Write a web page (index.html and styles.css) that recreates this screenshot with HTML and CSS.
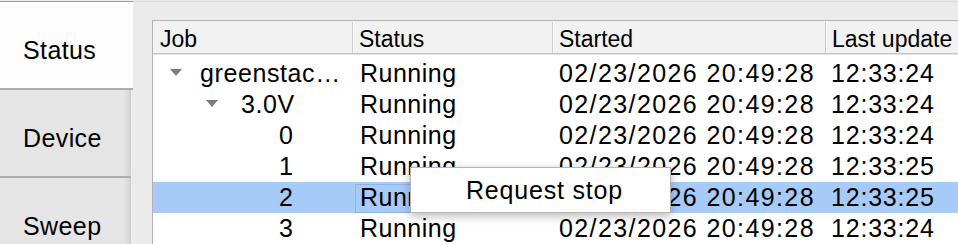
FILE: index.html
```html
<!DOCTYPE html>
<html>
<head>
<meta charset="utf-8">
<link rel="stylesheet" href="styles.css">
</head>
<body>
<div class="window">
  <nav class="tabs">
    <div class="tab active">Status</div>
    <div class="tab">Device</div>
    <div class="tab">Sweep</div>
  </nav>
  <main class="pane">
    <div class="tree">
      <div class="hdr">
        <div class="hc c1">Job</div>
        <div class="hc">Status</div>
        <div class="hc">Started</div>
        <div class="hc">Last update</div>
      </div>
      <div class="rows">
        <div class="row">
          <div class="cell job lvl0"><span class="arrow"></span><span class="name">greenstac…</span></div>
          <div class="cell st">Running</div>
          <div class="cell dt">02/23/2026 20:49:28</div>
          <div class="cell tm">12:33:24</div>
        </div>
        <div class="row">
          <div class="cell job lvl1"><span class="arrow"></span><span class="name">3.0V</span></div>
          <div class="cell st">Running</div>
          <div class="cell dt">02/23/2026 20:49:28</div>
          <div class="cell tm">12:33:24</div>
        </div>
        <div class="row">
          <div class="cell job lvl2">0</div>
          <div class="cell st">Running</div>
          <div class="cell dt">02/23/2026 20:49:28</div>
          <div class="cell tm">12:33:24</div>
        </div>
        <div class="row">
          <div class="cell job lvl2">1</div>
          <div class="cell st">Running</div>
          <div class="cell dt">02/23/2026 20:49:28</div>
          <div class="cell tm">12:33:25</div>
        </div>
        <div class="row selected">
          <div class="cell job lvl2">2</div>
          <div class="cell st focus">Running</div>
          <div class="cell dt">02/23/2026 20:49:28</div>
          <div class="cell tm">12:33:25</div>
        </div>
        <div class="row">
          <div class="cell job lvl2">3</div>
          <div class="cell st">Running</div>
          <div class="cell dt">02/23/2026 20:49:28</div>
          <div class="cell tm">12:33:24</div>
        </div>
      </div>
    </div>
    <div class="menu">Request stop</div>
  </main>
</div>
</body>
</html>
```

FILE: styles.css
```css
* { box-sizing: border-box; }

html, body {
  margin: 0;
  padding: 0;
  background: #ebebeb;
  overflow: hidden;
}

body {
  font-family: "Liberation Sans", Arial, sans-serif;
  color: #000;
}

.window {
  width: 958px;
  height: 244px;
  overflow: hidden;
  display: flex;
  align-items: flex-start;
  background: #ebebeb;
}

/* ---------- side tabs ---------- */
.tabs {
  width: 133px;
  flex: none;
  margin-top: 1px;
  border-top: 1px solid #a0a0a0;
  display: flex;
  flex-direction: column;
}

.tab {
  height: 88px;
  padding: 10px 0 0 23px;
  display: flex;
  align-items: center;
  font-size: 25px;
  letter-spacing: 0.4px;
  background: #e5e5e5;
  border-bottom: 2px solid #adadad;
  width: 131px;
  box-shadow: inset -7px 0 6px -5px rgba(0, 0, 0, 0.13);
}

.tab.active {
  width: 133px;
  background: #fdfdfd;
  box-shadow: none;
}

/* ---------- main pane ---------- */
.pane {
  position: relative;
  flex: 1;
  margin-top: 1px;
  border-top: 1px solid #d9d9d9;
  padding: 18px 0 0 19px;
  height: 243px;
}

.tree {
  width: 830px;
  height: 240px;
  background: #fff;
  border: 1px solid #b3b3b3;
  border-right: none;
  border-bottom: none;
}

.hdr {
  display: grid;
  grid-template-columns: 199px 200px 273px 1fr;
  height: 33px;
  background: #f2f2f2;
  border-bottom: 1px solid #c4c4c4;
  box-shadow: 0 1px 0 #e4e4e4;
  font-size: 23px;
}

.hc {
  padding: 3px 0 0 6px;
  line-height: 28px;
  border-left: 1px solid #cdcdcd;
  box-shadow: inset 1px 0 0 #fbfbfb;
  margin: 1px 0 0 0;
  white-space: nowrap;
}

.hc.c1 {
  border-left: none;
  box-shadow: none;
  padding-left: 7px;
}

.rows {
  padding-top: 4px;
}

.row {
  display: grid;
  grid-template-columns: 199px 200px 273px 1fr;
  height: 31px;
  font-size: 25px;
  line-height: 31px;
  white-space: nowrap;
}

.row.selected {
  background: #a6cbf8;
}

.cell {
  position: relative;
}

.job {
  display: flex;
  align-items: center;
  letter-spacing: 0.6px;
}

.lvl0 { padding-left: 17px; }
.lvl1 { padding-left: 53px; }
.lvl2 { padding-left: 126px; letter-spacing: 0; }

.arrow {
  width: 0;
  height: 0;
  border-left: 6px solid transparent;
  border-right: 6px solid transparent;
  border-top: 7px solid #7c7c7c;
  margin-top: -2px;
  flex: none;
}

.lvl0 .arrow { margin-right: 18px; }
.lvl1 .arrow { margin-right: 23px; }

.st {
  padding-left: 8px;
  letter-spacing: 0.5px;
}

.dt {
  padding-left: 7px;
  letter-spacing: 1.4px;
}

.tm {
  padding-left: 6px;
  letter-spacing: 0.8px;
}

.focus::before {
  content: "";
  position: absolute;
  top: 2px;
  bottom: 0;
  left: 3px;
  right: 0;
  border: 1px solid #8fb5e6;
}

/* ---------- context menu ---------- */
.menu {
  position: absolute;
  left: 277px;
  top: 165px;
  width: 261px;
  height: 46px;
  background: #fff;
  border: 1px solid #b4b4b4;
  box-shadow: 0 3px 9px rgba(0, 0, 0, 0.28);
  padding-left: 55px;
  font-size: 25px;
  letter-spacing: 0.8px;
  line-height: 44px;
  white-space: nowrap;
}
```
